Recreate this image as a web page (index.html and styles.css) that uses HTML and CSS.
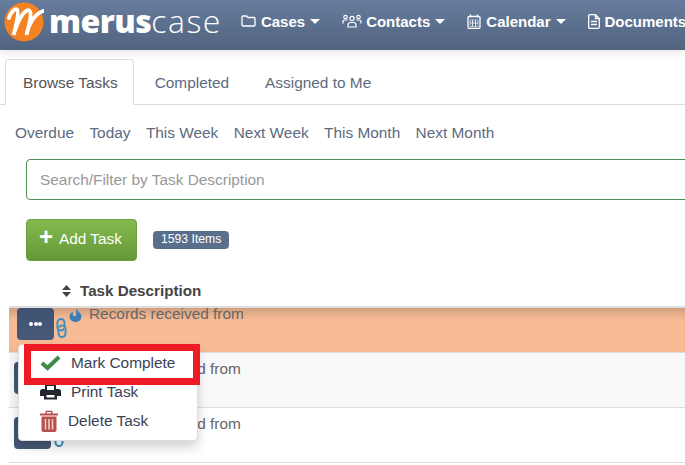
FILE: index.html
```html
<!DOCTYPE html>
<html>

<head>
    <title>Tasks | MerusCase</title>
    <meta http-equiv="Content-Type" content="text/html; charset=utf-8">
    <link rel="stylesheet" href="styles.css">
</head>

<body>
    <div id="page">
        <header class="topbar">
            <div class="logo">
                <svg class="logomark" width="40" height="40" viewBox="0 0 40 40">
                    <circle cx="20" cy="20" r="19.500" fill="#f58220"/>
                    <path d="M5 16 C7 10 11 6 13 7.500 C15 9.500 13 20 9.500 33 C13 22 18 11 23 8.500 C27 7 27 12 26 18 C25 24 23 29 22.500 33 C24 24 30 12 39 9" fill="none" stroke="#fff" stroke-width="3.800" stroke-linecap="round"/>
                </svg>
                <span class="brand"><b>merus</b>case</span>
            </div>
            <nav class="mainnav">
                <a class="navlink">
                    <svg class="navicon" width="15" height="14" viewBox="0 0 15 14"><path d="M1 3 Q1 2 2 2 H5.500 L7 3.500 H13 Q14 3.500 14 4.500 V11 Q14 12 13 12 H2 Q1 12 1 11 Z" fill="none" stroke="#fff" stroke-width="1.300"/></svg>
                    Cases<i class="caret"></i>
                </a>
                <a class="navlink">
                    <svg class="navicon wide" width="20" height="14" viewBox="0 0 20 14"><g fill="none" stroke="#fff" stroke-width="1.200"><circle cx="10" cy="4.500" r="2.200"/><path d="M6 13 V11 Q6 8.500 8.500 8.500 H11.500 Q14 8.500 14 11 V13 Z"/><circle cx="3.500" cy="3" r="1.700"/><circle cx="16.500" cy="3" r="1.700"/><path d="M1 9.500 V8 Q1 6 3 6 H5.500"/><path d="M19 9.500 V8 Q19 6 17 6 H14.500"/></g></svg>
                    Contacts<i class="caret"></i>
                </a>
                <a class="navlink">
                    <svg class="navicon" width="14" height="15" viewBox="0 0 13 15"><path d="M1.500 2.500 H11.500 Q12.500 2.500 12.500 3.500 V13 Q12.500 14.500 11 14.500 H2 Q0.500 14.500 0.500 13 V3.500 Q0.500 2.500 1.500 2.500 Z M3 0.500 V3.500 M10 0.500 V3.500" fill="none" stroke="#fff" stroke-width="1.300"/><path d="M2.500 6 H10.500 V12.500 H2.500 Z" fill="none" stroke="#fff" stroke-width="0.800" stroke-dasharray="1.500 0.700"/><path d="M2.500 9 H10.500 M5 6 V12.500 M8 6 V12.500" stroke="#fff" stroke-width="0.800"/></svg>
                    Calendar<i class="caret"></i>
                </a>
                <a class="navlink">
                    <svg class="navicon" width="12" height="15" viewBox="0 0 12 15"><path d="M1.500 0.700 H7.500 L11.300 4.500 V13 Q11.300 14.300 10 14.300 H2 Q0.700 14.300 0.700 13 V2 Q0.700 0.700 1.500 0.700 Z M7.500 0.700 V4.500 H11.300" fill="none" stroke="#fff" stroke-width="1.300"/><path d="M3 7.500 H9 M3 10.500 H9" stroke="#fff" stroke-width="1.400"/></svg>
                    Documents
                </a>
            </nav>
        </header>

        <ul class="tabs">
            <li class="tab active">Browse Tasks</li>
            <li class="tab">Completed</li>
            <li class="tab">Assigned to Me</li>
        </ul>

        <div class="filters">
            <a>Overdue</a>
            <a>Today</a>
            <a>This Week</a>
            <a>Next Week</a>
            <a>This Month</a>
            <a>Next Month</a>
        </div>

        <input class="search" type="text" placeholder="Search/Filter by Task Description">

        <div class="actions">
            <button class="addtask" type="button"><span class="plus">+</span>Add Task</button>
            <span class="badge">1593 Items</span>
        </div>

        <div class="tasktable">
            <div class="taskhead">
                <svg class="sorticon" width="9" height="12" viewBox="0 0 9 12"><path d="M4.500 0 L9 5 H0 Z M4.500 12 L0 7 H9 Z" fill="#444"/></svg>
                Task Description
            </div>

            <div class="task current">
                <button class="rowbtn" type="button"><i></i><i></i><i></i></button>
                <svg class="linkicon" width="11" height="20" viewBox="0 0 11 20"><g fill="none" stroke="#3d8fc0" stroke-width="2"><path d="M8.500 8 V4.500 A3.500 3.500 0 0 0 1.500 4.500 V8 A3.500 3.500 0 0 0 8 10.500"/><path d="M2.500 12 V15.500 A3.500 3.500 0 0 0 9.500 15.500 V12 A3.500 3.500 0 0 0 3 9.500"/></g></svg>
                <svg class="dropicon" width="13" height="14" viewBox="0 0 13 14"><path d="M7.500 0.500 C8 3 12.500 5 12.500 8.500 A6 5.500 0 0 1 0.500 8.500 C0.500 6 2 4.500 4 4 C3 7 5 9.500 6.500 8 C8 6.500 6.500 3 7.500 0.500 Z" fill="#3d7fb5"/></svg>
                <span class="tasktext">Records received from</span>
            </div>

            <div class="task striped">
                <button class="rowbtn" type="button"><i></i><i></i><i></i></button>
                <svg class="linkicon" width="11" height="20" viewBox="0 0 11 20"><g fill="none" stroke="#3d8fc0" stroke-width="2"><path d="M8.500 8 V4.500 A3.500 3.500 0 0 0 1.500 4.500 V8 A3.500 3.500 0 0 0 8 10.500"/><path d="M2.500 12 V15.500 A3.500 3.500 0 0 0 9.500 15.500 V12 A3.500 3.500 0 0 0 3 9.500"/></g></svg>
                <svg class="dropicon" width="13" height="14" viewBox="0 0 13 14"><path d="M7.500 0.500 C8 3 12.500 5 12.500 8.500 A6 5.500 0 0 1 0.500 8.500 C0.500 6 2 4.500 4 4 C3 7 5 9.500 6.500 8 C8 6.500 6.500 3 7.500 0.500 Z" fill="#3d7fb5"/></svg>
                <span class="tasktext">Records received from</span>
            </div>

            <div class="task">
                <button class="rowbtn" type="button"><i></i><i></i><i></i></button>
                <svg class="linkicon" width="11" height="20" viewBox="0 0 11 20"><g fill="none" stroke="#3d8fc0" stroke-width="2"><path d="M8.500 8 V4.500 A3.500 3.500 0 0 0 1.500 4.500 V8 A3.500 3.500 0 0 0 8 10.500"/><path d="M2.500 12 V15.500 A3.500 3.500 0 0 0 9.500 15.500 V12 A3.500 3.500 0 0 0 3 9.500"/></g></svg>
                <svg class="dropicon" width="13" height="14" viewBox="0 0 13 14"><path d="M7.500 0.500 C8 3 12.500 5 12.500 8.500 A6 5.500 0 0 1 0.500 8.500 C0.500 6 2 4.500 4 4 C3 7 5 9.500 6.500 8 C8 6.500 6.500 3 7.500 0.500 Z" fill="#3d7fb5"/></svg>
                <span class="tasktext">Records received from</span>
            </div>
        </div>

        <div class="taskmenu">
            <a class="menuitem">
                <svg class="menuicon" width="21" height="16" viewBox="0 0 21 16"><path d="M2 8 L7.500 13 L19 2" fill="none" stroke="#3f8b45" stroke-width="4"/></svg>
                Mark Complete
            </a>
            <a class="menuitem">
                <svg class="menuicon" width="21" height="17" viewBox="0 0 21 17"><path d="M5 1 H16 V6 H18.500 Q21 6 21 8.500 V13 H17 V16.500 H4 V13 H0 V8.500 Q0 6 2.500 6 H5 Z M7 3 V7 H14 V3 Z M6.500 12 V14.500 H14.500 V12 Z" fill="#22262e" fill-rule="evenodd"/></svg>
                Print Task
            </a>
            <a class="menuitem delete">
                <svg class="menuicon" width="18" height="22" viewBox="0 0 18 22"><path d="M0 3.500 H18 V5.500 H0 Z M5.500 3.500 V0.800 H12.500 V3.500 H11 V2 H7 V3.500 Z" fill="#b9504c"/><path d="M1.500 6.500 H16.500 V20 Q16.500 22 14.500 22 H3.500 Q1.500 22 1.500 20 Z" fill="#b9504c"/><path d="M5.500 9 V19.500 M9 9 V19.500 M12.500 9 V19.500" stroke="#f1d3ce" stroke-width="1.500"/></svg>
                Delete Task
            </a>
        </div>
        <div class="callout"></div>
    </div>
</body>

</html>
```

FILE: styles.css
```css
html,
body {
    margin: 0;
    height: 100%;
    overflow: hidden;
    background-color: white;
}

* {
    font-family: "Liberation Sans", Arial, sans-serif;
    box-sizing: border-box;
}

#page {
    position: relative;
    height: 465px;
    overflow: hidden;
    font-size: 15.400px;
    color: #5b6b80;
}

.topbar {
    display: flex;
    align-items: center;
    height: 50px;
    padding-bottom: 8px;
    background: linear-gradient(#677d9d, #50647f);
    box-shadow: 0 2px 10px rgba(0, 0, 0, 0.12);
    white-space: nowrap;
}

.logo {
    display: flex;
    align-items: center;
    margin: 2px 0 0 4px;
    flex: none;
}

.brand {
    font-family: "Open Sans", sans-serif;
    font-size: 32px;
    font-weight: 300;
    line-height: 40px;
    letter-spacing: 1.500px;
    color: white;
    margin-left: 5px;
    margin-top: -3px;
}

.brand b {
    font-family: "Open Sans", sans-serif;
    font-weight: 800;
    letter-spacing: -0.500px;
}

.mainnav {
    display: flex;
    align-items: center;
    margin-left: 19px;
    flex: none;
}

.navlink {
    display: flex;
    align-items: center;
    margin-right: 22px;
    font-size: 15px;
    font-weight: bold;
    color: white;
}

.navicon {
    margin-right: 5px;
}

.navicon.wide {
    margin-right: 4px;
}

.caret {
    margin-left: 5px;
    border-top: 5px solid white;
    border-left: 5px solid transparent;
    border-right: 5px solid transparent;
}

.tabs {
    display: flex;
    list-style: none;
    margin: 9px 0 0;
    padding: 0 0 0 5px;
    height: 46px;
    border-bottom: 1px solid #ddd;
}

.tab {
    height: 46px;
    margin-right: 1px;
    padding: 0 16px 0 17px;
    line-height: 45px;
    border: 1px solid transparent;
}

.tab.active {
    margin-right: 3px;
    padding-right: 15px;
    background-color: white;
    color: #555;
    border-color: #ddd #ddd white;
    border-radius: 4px 4px 0 0;
}

.filters {
    display: flex;
    gap: 15.400px;
    margin: 18px 0 0 15px;
    line-height: 20px;
}

.search {
    display: block;
    width: 720px;
    height: 41px;
    margin: 16px 0 0 26px;
    padding: 0 13px;
    font-size: 15.400px;
    border: 1px solid #4f8f54;
    border-radius: 4px;
    outline: none;
}

.search::placeholder {
    color: #999;
}

.actions {
    display: flex;
    align-items: center;
    margin: 19px 0 0 26px;
}

.addtask {
    height: 42px;
    width: 111px;
    padding: 0 2px 4px 0;
    font-size: 15.400px;
    color: white;
    border: 1px solid #6b9e3f;
    border-radius: 4px;
    background: linear-gradient(#86ba50, #639836);
}

.plus {
    font-size: 24px;
    font-weight: bold;
    line-height: 15px;
    margin-right: 6px;
    vertical-align: -1px;
}

.badge {
    margin-left: 16px;
    padding: 0 8px;
    height: 18px;
    font-size: 12.200px;
    line-height: 17px;
    color: white;
    background-color: #5a6f8c;
    border-radius: 4px;
}

.tasktable {
    margin: 20px 0 0 9px;
}

.taskhead {
    display: flex;
    align-items: center;
    height: 27px;
    padding: 0 0 6px 53px;
    font-size: 15.200px;
    font-weight: bold;
    color: #444;
    border-bottom: 2px solid #ddd;
}

.sorticon {
    margin-right: 9px;
}

.task {
    display: flex;
    align-items: flex-start;
    height: 55px;
    padding: 9px 0 0 5px;
    border-bottom: 1px solid #ddd;
    color: #666;
}

.task.current {
    height: 45px;
    padding: 0 0 0 8px;
    background-color: #f7bc96;
    box-shadow: inset 0 10px 10px -5px rgba(0, 0, 0, 0.18);
}

.task.striped {
    background-color: #f9f9f9;
}

.rowbtn {
    display: flex;
    align-items: center;
    justify-content: center;
    gap: 0.500px;
    width: 37px;
    height: 32px;
    padding: 0;
    border: none;
    border-radius: 4px;
    background: linear-gradient(#3e5272, #475a78);
}

.rowbtn i {
    width: 4px;
    height: 4px;
    border-radius: 50%;
    background-color: white;
}

.linkicon {
    margin: 10px 0 0 2px;
}

.dropicon {
    margin: 0 0 0 2px;
}

.tasktext {
    margin-left: 7px;
    line-height: 13px;
}

.task.current .tasktext {
    line-height: 12px;
}

.taskmenu {
    position: absolute;
    left: 18px;
    top: 344px;
    width: 180px;
    height: 97px;
    padding-top: 3px;
    background-color: white;
    border: 1px solid #ddd;
    border-radius: 4px;
    box-shadow: 0 6px 12px rgba(0, 0, 0, 0.18);
}

.menuitem {
    display: flex;
    align-items: center;
    height: 29px;
    padding-left: 21px;
    color: #3b3f55;
}

.menuicon {
    margin-right: 10px;
    flex: none;
}

.callout {
    position: absolute;
    left: 24px;
    top: 344px;
    width: 176px;
    height: 41px;
    border: 7px solid #ed1c24;
}
```
